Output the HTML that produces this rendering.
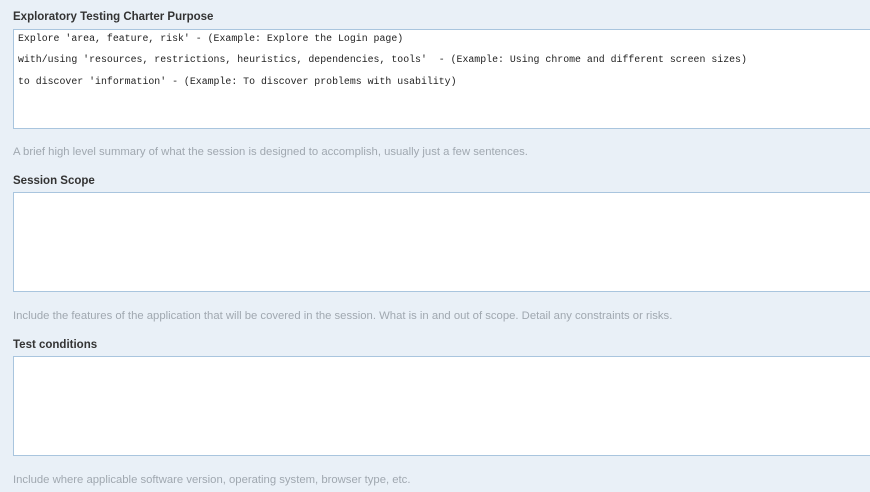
<!DOCTYPE html>
<html><head><style>
body{margin:0;width:870px;height:492px;background:#e9f0f7;overflow:hidden;font-family:"Liberation Sans",sans-serif}
.lab{position:absolute;left:13px;font-size:11.5px;font-weight:bold;color:#333}
.box{position:absolute;left:13px;width:870px;height:98px;background:#fff;border:1px solid #a9c5de}
.help{position:absolute;left:13px;font-size:11.3px;color:#a0a8b0}
.t{position:absolute;left:4px;font-family:"Liberation Mono",monospace;font-size:9.9px;color:#222;white-space:pre}
</style></head><body>
<div class="lab" style="top:11px">Exploratory Testing Charter Purpose</div>
<div class="box" style="top:29px">
<div class="t" style="top:3px">Explore 'area, feature, risk' - (Example: Explore the Login page)</div>
<div class="t" style="top:24px">with/using 'resources, restrictions, heuristics, dependencies, tools'  - (Example: Using chrome and different screen sizes)</div>
<div class="t" style="top:46px">to discover 'information' - (Example: To discover problems with usability)</div>
</div>
<div class="help" style="top:146px">A brief high level summary of what the session is designed to accomplish, usually just a few sentences.</div>
<div class="lab" style="top:175px">Session Scope</div>
<div class="box" style="top:192px"></div>
<div class="help" style="top:310px">Include the features of the application that will be covered in the session. What is in and out of scope. Detail any constraints or risks.</div>
<div class="lab" style="top:339px">Test conditions</div>
<div class="box" style="top:356px"></div>
<div class="help" style="top:474px">Include where applicable software version, operating system, browser type, etc.</div>
</body></html>
